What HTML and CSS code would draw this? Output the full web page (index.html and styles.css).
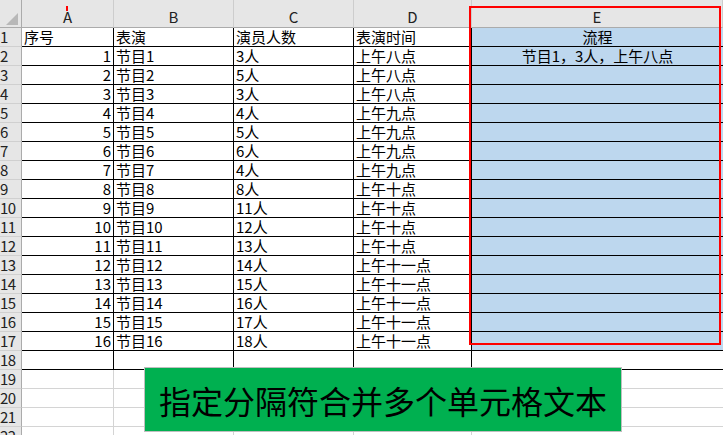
FILE: index.html
```html
<!DOCTYPE html>
<html lang="zh">
<head>
<meta charset="utf-8">
<title>Sheet</title>
<link rel="stylesheet" href="styles.css">
</head>
<body>
<div class="sheet">
  <div class="ch corner"><span class="tri"></span></div>
  <div class="ch">A</div>
  <div class="ch">B</div>
  <div class="ch">C</div>
  <div class="ch">D</div>
  <div class="ch">E</div>

  <div class="rh">1</div><div class="c">序号</div><div class="c">表演</div><div class="c">演员人数</div><div class="c">表演时间</div><div class="c e ctr">流程</div>
  <div class="rh">2</div><div class="c r">1</div><div class="c">节目1</div><div class="c">3人</div><div class="c">上午八点</div><div class="c e ctr">节目1，3人，上午八点</div>
  <div class="rh">3</div><div class="c r">2</div><div class="c">节目2</div><div class="c">5人</div><div class="c">上午八点</div><div class="c e"></div>
  <div class="rh">4</div><div class="c r">3</div><div class="c">节目3</div><div class="c">3人</div><div class="c">上午八点</div><div class="c e"></div>
  <div class="rh">5</div><div class="c r">4</div><div class="c">节目4</div><div class="c">4人</div><div class="c">上午九点</div><div class="c e"></div>
  <div class="rh">6</div><div class="c r">5</div><div class="c">节目5</div><div class="c">5人</div><div class="c">上午九点</div><div class="c e"></div>
  <div class="rh">7</div><div class="c r">6</div><div class="c">节目6</div><div class="c">6人</div><div class="c">上午九点</div><div class="c e"></div>
  <div class="rh">8</div><div class="c r">7</div><div class="c">节目7</div><div class="c">4人</div><div class="c">上午九点</div><div class="c e"></div>
  <div class="rh">9</div><div class="c r">8</div><div class="c">节目8</div><div class="c">8人</div><div class="c">上午十点</div><div class="c e"></div>
  <div class="rh">10</div><div class="c r">9</div><div class="c">节目9</div><div class="c">11人</div><div class="c">上午十点</div><div class="c e"></div>
  <div class="rh">11</div><div class="c r">10</div><div class="c">节目10</div><div class="c">12人</div><div class="c">上午十点</div><div class="c e"></div>
  <div class="rh">12</div><div class="c r">11</div><div class="c">节目11</div><div class="c">13人</div><div class="c">上午十点</div><div class="c e"></div>
  <div class="rh">13</div><div class="c r">12</div><div class="c">节目12</div><div class="c">14人</div><div class="c">上午十一点</div><div class="c e"></div>
  <div class="rh">14</div><div class="c r">13</div><div class="c">节目13</div><div class="c">15人</div><div class="c">上午十一点</div><div class="c e"></div>
  <div class="rh">15</div><div class="c r">14</div><div class="c">节目14</div><div class="c">16人</div><div class="c">上午十一点</div><div class="c e"></div>
  <div class="rh">16</div><div class="c r">15</div><div class="c">节目15</div><div class="c">17人</div><div class="c">上午十一点</div><div class="c e"></div>
  <div class="rh">17</div><div class="c r">16</div><div class="c">节目16</div><div class="c">18人</div><div class="c">上午十一点</div><div class="c e"></div>
  <div class="rh">18</div><div class="c"></div><div class="c"></div><div class="c"></div><div class="c"></div><div class="c last"></div>
  <div class="rh">19</div><div class="c g"></div><div class="c g"></div><div class="c g"></div><div class="c g"></div><div class="c g last"></div>
  <div class="rh">20</div><div class="c g"></div><div class="c g"></div><div class="c g"></div><div class="c g"></div><div class="c g last"></div>
  <div class="rh">21</div><div class="c g"></div><div class="c g"></div><div class="c g"></div><div class="c g"></div><div class="c g last"></div>
  <div class="rh">22</div><div class="c g"></div><div class="c g"></div><div class="c g"></div><div class="c g"></div><div class="c g last"></div>
</div>
<div class="tick"></div>
<div class="selection"></div>
<div class="banner">指定分隔符合并多个单元格文本</div>
</body>
</html>
```

FILE: styles.css
```css
html, body {
  margin: 0;
  padding: 0;
  width: 723px;
  height: 435px;
  overflow: hidden;
  background: #ffffff;
  font-family: "Noto Sans CJK SC", "Noto Sans", sans-serif;
  color: #000;
}

.sheet {
  display: grid;
  grid-template-columns: 22px 92px 120px 120px 118px 251px;
  grid-template-rows: 28px;
  grid-auto-rows: 19px;
}

.sheet > div {
  box-sizing: border-box;
  display: flex;
  align-items: flex-end;
  white-space: nowrap;
  font-size: 15px;
  line-height: 18px;
}

.ch {
  background: #e6e6e6;
  border-right: 1px solid #cdcdcd;
  border-bottom: 1px solid #ababab;
  justify-content: center;
  padding-bottom: 1px;
  color: #222;
}

.corner {
  justify-content: flex-end;
  padding: 0 3px 2px 0;
  border-right: 1px solid #ababab;
}

.tri {
  width: 12px;
  height: 12px;
  background: #b8b8b8;
  clip-path: polygon(100% 0, 100% 100%, 0 100%);
}

.rh {
  background: #e6e6e6;
  border-right: 1px solid #ababab;
  border-bottom: 1px solid #d0d0d0;
  padding-left: 0;
  color: #222;
  letter-spacing: -0.5px;
}

.c {
  border-right: 1px solid #000;
  border-bottom: 1px solid #000;
  padding: 0 2px 0 2px;
}

.r { justify-content: flex-end; padding-right: 2px; }
.ctr { justify-content: center; }
.e { background: #bdd7ee; border-right: none; }
.g { border-right: 1px solid #d4d4d4; border-bottom: 1px solid #d4d4d4; }
.sheet > .last { border-right: none; }

.tick {
  position: absolute;
  left: 66px;
  top: 6px;
  width: 2px;
  height: 5px;
  background: #ff0000;
}

.selection {
  position: absolute;
  left: 469px;
  top: 6px;
  width: 252px;
  height: 339px;
  box-sizing: border-box;
  border: 2px solid #ff0000;
}

.banner {
  position: absolute;
  left: 144px;
  top: 367px;
  width: 478px;
  height: 65px;
  box-sizing: border-box;
  background: #00b050;
  border: 1px solid #bfbfbf;
  display: flex;
  align-items: center;
  justify-content: center;
  font-size: 32px;
  color: #000;
}
```
